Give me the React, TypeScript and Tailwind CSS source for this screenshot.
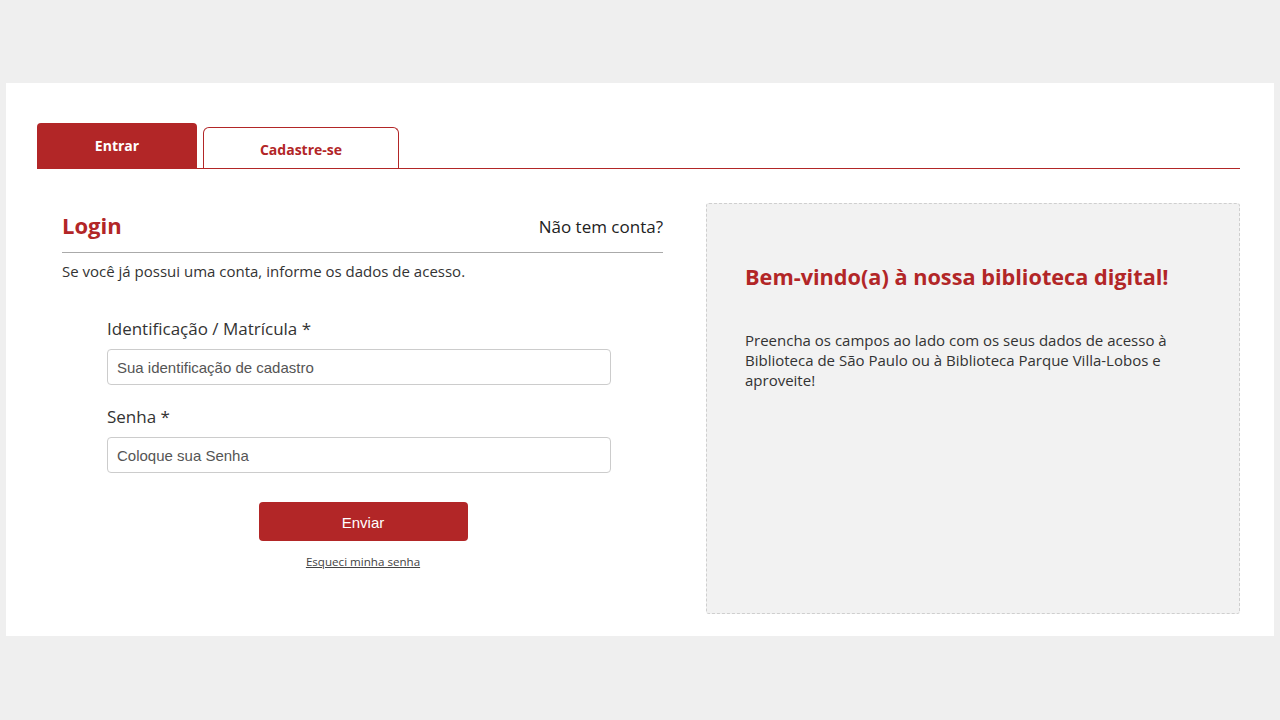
import { FC } from 'react';

const App: FC = () => {
  return (
    <div className="min-h-[720px] bg-[#efefef] pt-[83px] font-['Open_Sans',sans-serif]">
      <div className="mx-[6px] h-[553px] bg-white pl-[31px] pr-[34px] pt-[40px]">
        {/* tabs */}
        <div className="flex items-end gap-[6px] border-b border-[#b22627]">
          <div className="flex h-[45px] w-[160px] items-start justify-center rounded-t-[4px] bg-[#b22627] pt-[12px] text-[14px] font-bold text-white">
            Entrar
          </div>
          <div className="flex h-[41px] w-[196px] items-start justify-center rounded-t-[6px] border border-b-0 border-[#b22627] pt-[11px] text-[14px] font-bold text-[#b22627]">
            Cadastre-se
          </div>
        </div>

        <div className="flex justify-between pt-[34px]">
          {/* login column */}
          <div className="w-[601px] ml-[25px] pt-[1px]">
            <div className="flex items-center justify-between border-b border-[#aaaaaa] pt-[6px] pb-[12px]">
              <h1 className="text-[22px] font-bold leading-[30px] text-[#b22627]">Login</h1>
              <span className="mt-[4px] text-[17px] leading-[24px] text-[#222]">Não tem conta?</span>
            </div>
            <p className="mt-[8px] text-[15px] leading-[20px] text-[#333]">
              Se você já possui uma conta, informe os dados de acesso.
            </p>

            <div className="ml-[45px] mt-[36px] w-[504px]">
              <label className="block text-[17px] leading-[24px] text-[#333]">Identificação / Matrícula *</label>
              <input
                className="mt-[8px] block h-[36px] w-full rounded-[4px] border border-[#cccccc] px-[9px] font-['Liberation_Sans',sans-serif] text-[15px] text-[#555] placeholder:text-[#555] outline-none"
                placeholder="Sua identificação de cadastro"
              />
              <label className="mt-[20px] block text-[17px] leading-[24px] text-[#333]">Senha *</label>
              <input
                type="password"
                className="mt-[8px] block h-[36px] w-full rounded-[4px] border border-[#cccccc] px-[9px] font-['Liberation_Sans',sans-serif] text-[15px] text-[#555] placeholder:text-[#555] outline-none"
                placeholder="Coloque sua Senha"
              />
              <div className="mt-[29px] flex flex-col items-center pl-[8px]">
                <button className="h-[39px] w-[209px] rounded-[4px] bg-[#b22627] pt-[3px] font-['Liberation_Sans',sans-serif] text-[15px] text-white">
                  Enviar
                </button>
                <a className="mt-[13px] text-[11.6px] leading-[16px] text-[#444] underline">Esqueci minha senha</a>
              </div>
            </div>
          </div>

          {/* welcome panel */}
          <div className="h-[411px] w-[534px] rounded-[3px] border border-dashed border-[#cfcfcf] bg-[#f2f2f2] px-[38px] pt-[58px]">
            <h2 className="text-[21.7px] font-bold leading-[30px] text-[#b22627]">
              Bem-vindo(a) à nossa biblioteca digital!
            </h2>
            <p className="mt-[38px] text-[15px] leading-[20px] text-[#333]">
              Preencha os campos ao lado com os seus dados de acesso à Biblioteca de São Paulo ou à Biblioteca Parque Villa-Lobos e aproveite!
            </p>
          </div>
        </div>
      </div>
    </div>
  );
};

export default App;
